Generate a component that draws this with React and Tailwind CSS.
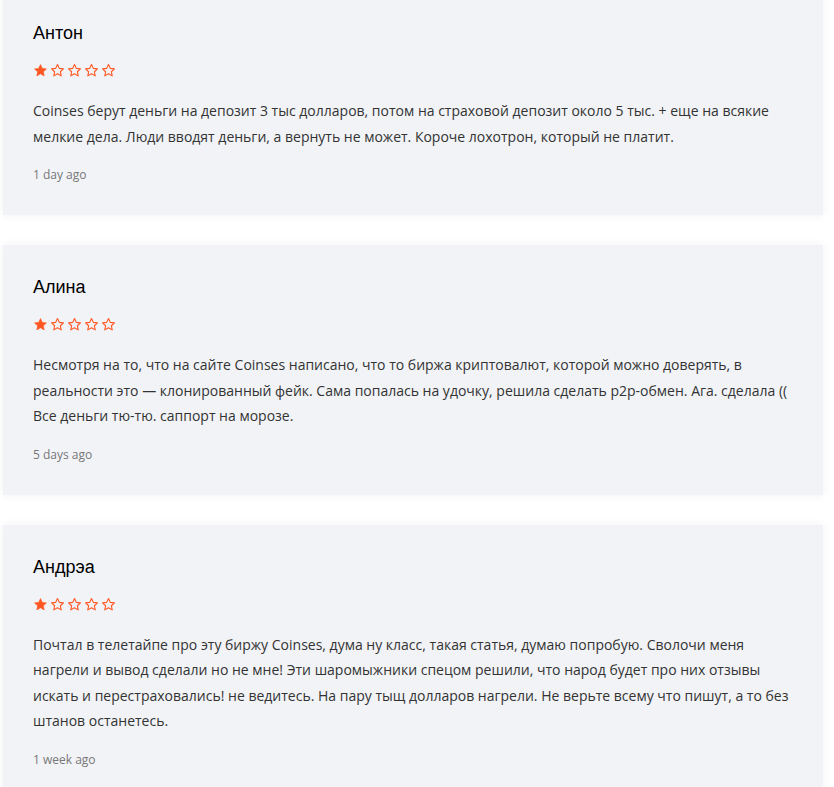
const reviews = [
  {
    name: "Антон",
    text: "Coinses берут деньги на депозит 3 тыс долларов, потом на страховой депозит около 5 тыс. + еще на всякие мелкие дела. Люди вводят деньги, а вернуть не может. Короче лохотрон, который не платит.",
    time: "1 day ago",
  },
  {
    name: "Алина",
    text: "Несмотря на то, что на сайте Coinses написано, что то биржа криптовалют, которой можно доверять, в реальности это — клонированный фейк. Сама попалась на удочку, решила сделать p2p-обмен. Ага. сделала (( Все деньги тю-тю. саппорт на морозе.",
    time: "5 days ago",
  },
  {
    name: "Андрэа",
    text: "Почтал в телетайпе про эту биржу Coinses, дума ну класс, такая статья, думаю попробую. Сволочи меня нагрели и вывод сделали но не мне! Эти шаромыжники спецом решили, что народ будет про них отзывы искать и перестраховались! не ведитесь. На пару тыщ долларов нагрели. Не верьте всему что пишут, а то без штанов останетесь.",
    time: "1 week ago",
  },
];

const Star = ({ filled }) => (
  <svg width="15" height="15" viewBox="0 0 24 24" className="shrink-0">
    <path
      d="M12 2.5l2.9 6.1 6.6.8-4.9 4.6 1.3 6.6L12 17.3l-5.9 3.3 1.3-6.6-4.9-4.6 6.6-.8z"
      fill={filled ? "#ff5722" : "none"}
      stroke="#ff5722"
      strokeWidth={filled ? "1" : "1.8"}
      strokeLinejoin="round"
    />
  </svg>
);

const Review = ({ name, text, time }) => {
  return (
    <div className="bg-[#f2f3f7] px-[30px] pt-[30px] pb-[31px] shadow-[0_0_10px_rgba(0,0,0,0.06)]">
      <div className="font-['Liberation_Sans',sans-serif] text-[18px] leading-[24px] text-black">
        {name}
      </div>
      <div className="flex gap-[2px] mt-[18px]">
        <Star filled />
        <Star />
        <Star />
        <Star />
        <Star />
      </div>
      <p className="mt-[20px] text-[14px] leading-[25.5px] text-[#333]">{text}</p>
      <div className="mt-[17px] text-[12px] leading-[18px] text-[#777]">{time}</div>
    </div>
  );
};

export default function App() {
  return (
    <div className="bg-white min-h-screen font-['Open_Sans',sans-serif] pl-[3px] pr-[11px] -mt-[9px] flex flex-col gap-[30px]">
      {reviews.map((r) => (
        <Review key={r.name} {...r} />
      ))}
    </div>
  );
}
